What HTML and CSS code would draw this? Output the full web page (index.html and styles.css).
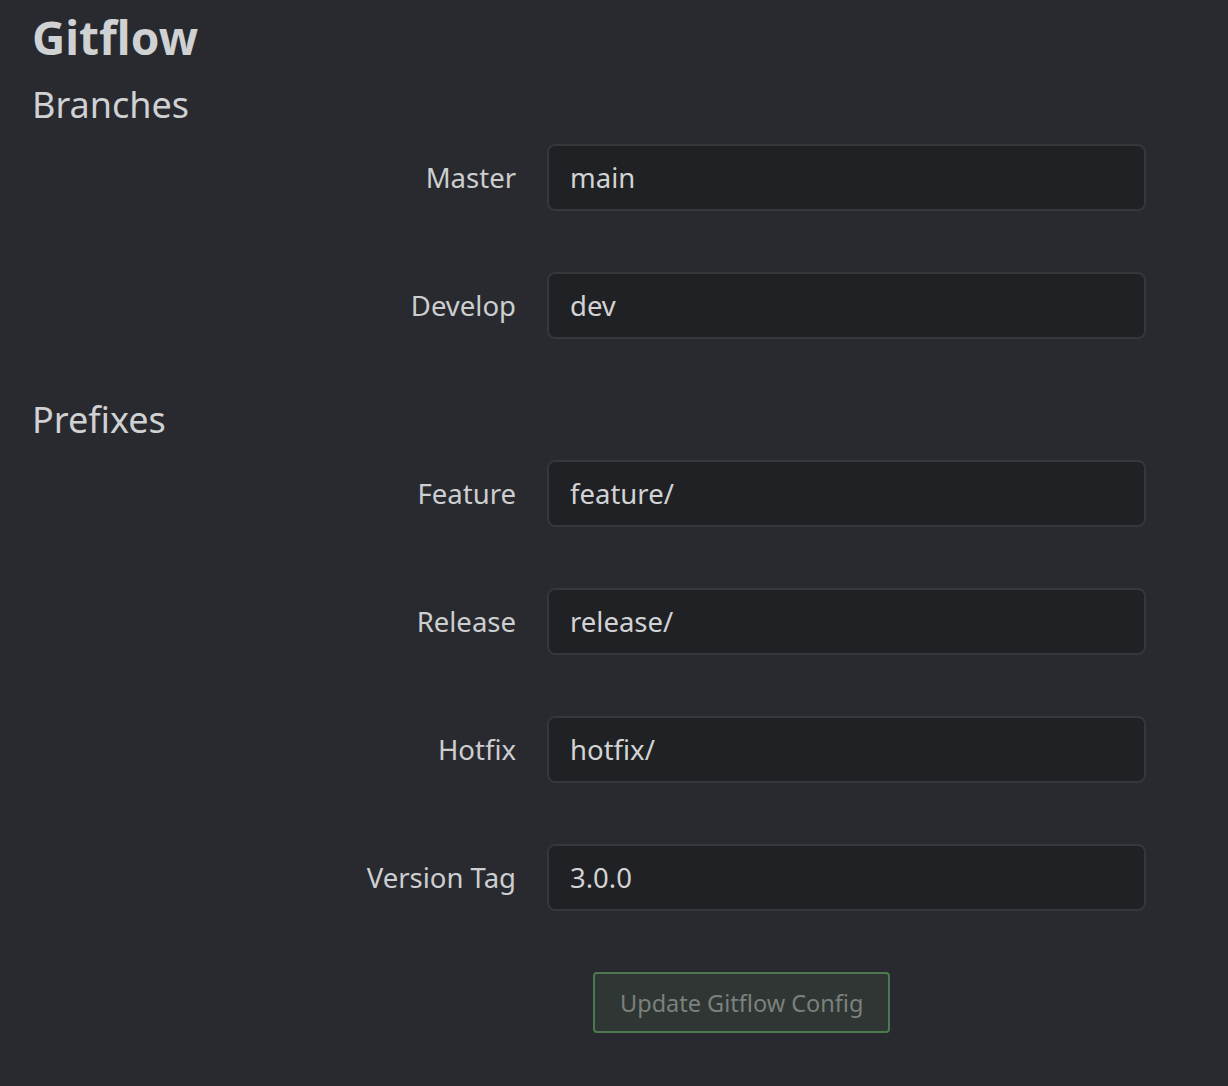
FILE: index.html
```html
<!DOCTYPE html>
<html lang="en">
<head>
  <meta charset="UTF-8">
  <meta name="viewport" content="width=device-width, initial-scale=1.0">
  <title>Gitflow</title>
  <link rel="stylesheet" href="styles.css">
</head>
<body>
  <div class="container">
    <h1>Gitflow</h1>

    <h2 class="section first">Branches</h2>
    <div class="form-group">
      <div class="form-row">
        <label for="master">Master</label>
        <input type="text" id="master" value="main">
      </div>
      <div class="form-row">
        <label for="develop">Develop</label>
        <input type="text" id="develop" value="dev">
      </div>
    </div>

    <h2 class="section">Prefixes</h2>
    <div class="form-group">
      <div class="form-row">
        <label for="feature">Feature</label>
        <input type="text" id="feature" value="feature/">
      </div>
      <div class="form-row">
        <label for="release">Release</label>
        <input type="text" id="release" value="release/">
      </div>
      <div class="form-row">
        <label for="hotfix">Hotfix</label>
        <input type="text" id="hotfix" value="hotfix/">
      </div>
      <div class="form-row">
        <label for="version_tag">Version Tag</label>
        <input type="text" id="version_tag" value="3.0.0">
      </div>
      <div class="form-row">
        <span class="spacer"></span>
        <button class="btn" disabled>Update Gitflow Config</button>
      </div>
    </div>
  </div>
</body>
</html>
```

FILE: styles.css
```css
body {
  font-family: "Noto Sans", "Open Sans", sans-serif;
  margin: 0;
  padding: 0;
  background-color: #292a2f;
  color: #cfd0d2;
}
.container {
  padding: 9px 32px 40px;
}
.container h1 {
  margin: 0;
  font-size: 46px;
  line-height: 56px;
  font-weight: 700;
  color: #d0d1d3;
}
.section {
  margin: 59px 0 18px;
  font-size: 36px;
  line-height: 44px;
  font-weight: 400;
  color: #d0d1d3;
}
.section.first {
  margin-top: 18px;
  margin-bottom: 17px;
}
.form-group {
  display: flex;
  flex-direction: column;
  gap: 61px;
}
.form-row {
  display: flex;
  align-items: center;
  gap: 31px;
}
.form-row label,
.form-row .spacer {
  width: 484px;
  flex-shrink: 0;
  text-align: right;
  font-size: 27.5px;
  color: #cdced0;
}
.form-row input {
  box-sizing: border-box;
  width: 599px;
  height: 67px;
  padding: 0 21px;
  font-family: inherit;
  font-size: 27.5px;
  color: #d2d3d5;
  background: #202124;
  border: 2px solid #35373b;
  border-radius: 8px;
  outline: none;
}
.btn {
  box-sizing: border-box;
  margin-left: 46px;
  height: 61px;
  padding: 0 25px;
  font-family: inherit;
  font-size: 23.5px;
  color: #7b817d;
  background: #2f3633;
  border: 2px solid #4c7a4e;
  border-radius: 4px;
}
```
